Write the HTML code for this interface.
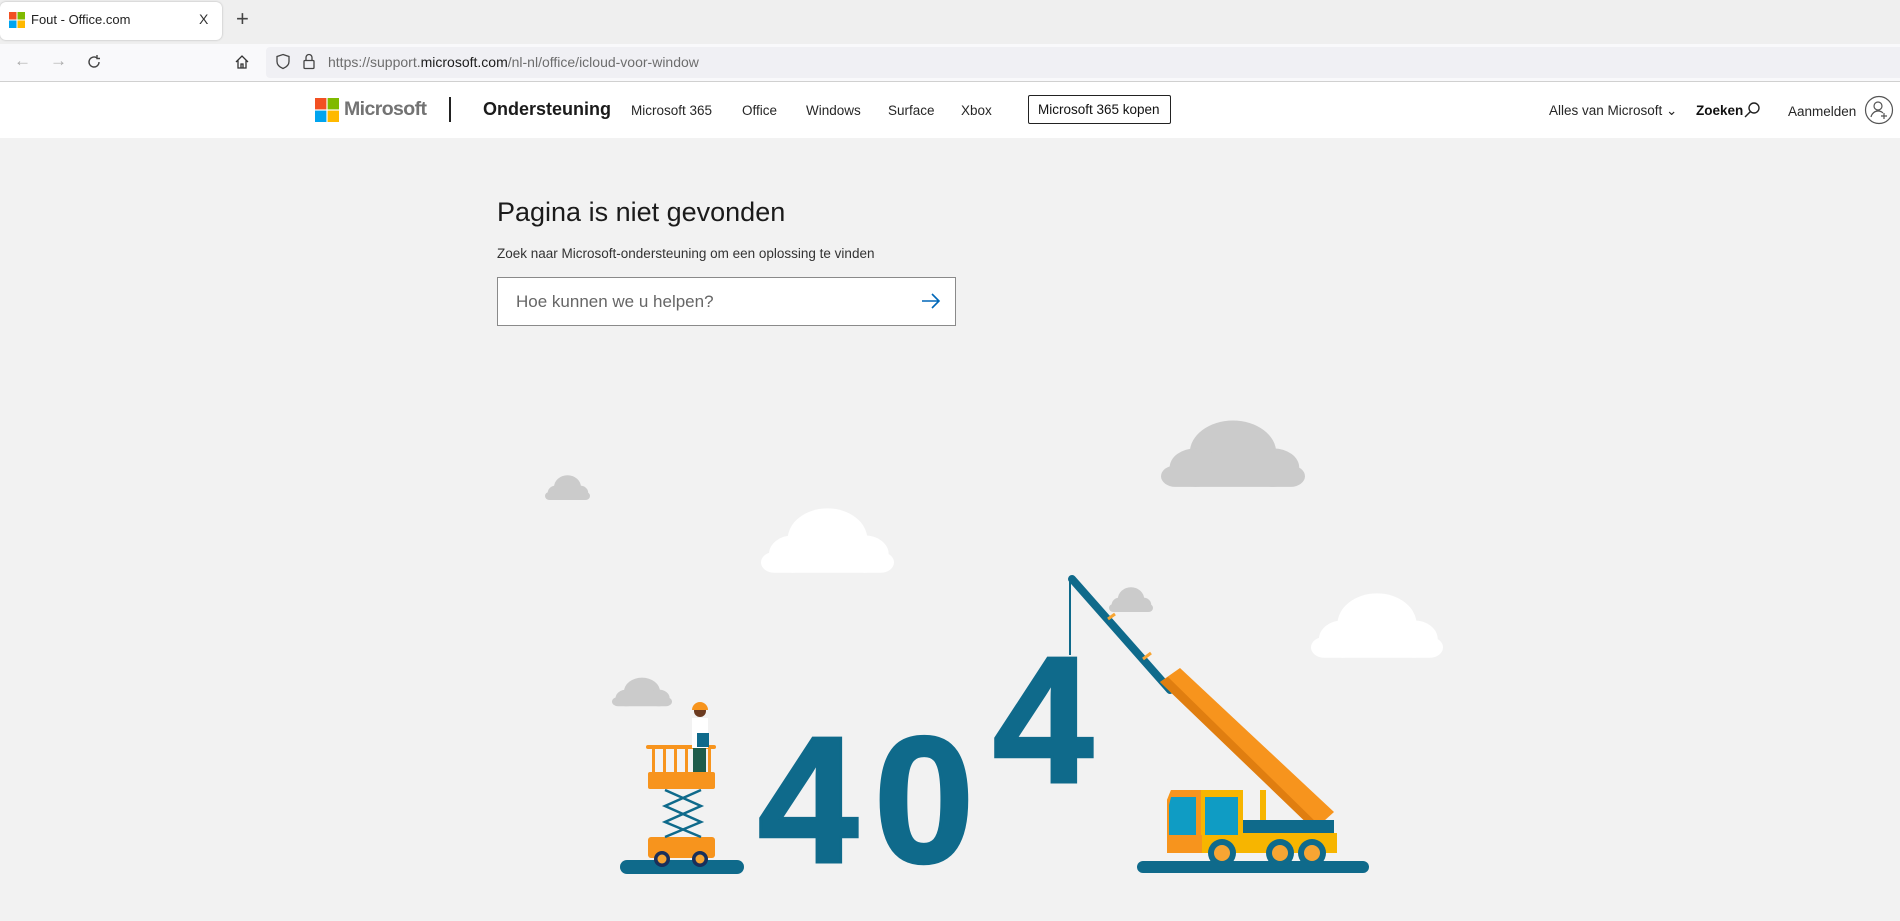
<!DOCTYPE html>
<html><head><meta charset="utf-8"><style>
*{margin:0;padding:0;box-sizing:border-box}
body{width:1900px;height:921px;overflow:hidden;background:#f2f2f2;font-family:"Liberation Sans",sans-serif;position:relative;color:#1b1b1b}
.abs{position:absolute;white-space:nowrap}
#tabs{position:absolute;left:0;top:0;width:1900px;height:44px;background:#efefef}
#tab{position:absolute;left:0;top:2px;width:222px;height:38px;background:#fff;border-radius:6px;box-shadow:0 0 2px rgba(0,0,0,.25)}
#nav{position:absolute;left:0;top:44px;width:1900px;height:38px;background:#f9f9fb;border-bottom:1px solid #d0d0d0}
#url{position:absolute;left:266px;top:47px;width:1634px;height:31px;background:#f0f0f4;border-radius:4px 0 0 4px}
#hdr{position:absolute;left:0;top:82px;width:1900px;height:56px;background:#fff}
.n{font-size:13.5px;top:103px;color:#262626}
</style></head><body>
<div id="tabs"></div>
<div id="tab"></div>
<svg class="abs" style="left:9px;top:12px" width="16" height="16"><rect width="7.5" height="7.5" fill="#f25022"/><rect x="8.5" width="7.5" height="7.5" fill="#7fba00"/><rect y="8.5" width="7.5" height="7.5" fill="#00a4ef"/><rect x="8.5" y="8.5" width="7.5" height="7.5" fill="#ffb900"/></svg>
<div class="abs" style="left:31px;top:12px;font-size:13px;color:#222">Fout - Office.com</div>
<div class="abs" style="left:199px;top:11px;font-size:14px;color:#333">X</div>
<div class="abs" style="left:236px;top:6px;font-size:22px;color:#444;font-weight:300">+</div>
<div id="nav"></div>
<div id="url"></div>
<div class="abs" style="left:14px;top:51px;font-size:17px;color:#aaa">←</div>
<div class="abs" style="left:50px;top:51px;font-size:17px;color:#aaa">→</div>
<svg class="abs" style="left:86px;top:54px" width="16" height="16" fill="none" stroke="#444" stroke-width="1.4"><path d="M13 8a5 5 0 1 1-2-4M11 1v3.5h3"/></svg>
<svg class="abs" style="left:234px;top:54px" width="16" height="16" fill="none" stroke="#333" stroke-width="1.3"><path d="M2 8L8 2l6 6M4 6.5V14h8V6.5M7 14v-4h2v4"/></svg>
<svg class="abs" style="left:275px;top:53px" width="16" height="17" fill="none" stroke="#444" stroke-width="1.3"><path d="M8 1.5l6 2v5c0 3.5-3 5.8-6 7-3-1.2-6-3.5-6-7v-5z"/></svg>
<svg class="abs" style="left:302px;top:53px" width="14" height="17" fill="none" stroke="#444" stroke-width="1.3"><rect x="2" y="7.5" width="10" height="8" rx="1"/><path d="M4 7.5V4.5a3 3 0 0 1 6 0v3"/></svg>
<div class="abs" style="left:328px;top:54px;font-size:14px;color:#6d6d6d">https://support.<span style="color:#1b1b1b">microsoft.com</span>/nl-nl/office/icloud-voor-window</div>
<div id="hdr"></div>
<svg class="abs" style="left:315px;top:98px" width="24" height="24"><rect width="11.4" height="11.4" fill="#f25022"/><rect x="12.6" width="11.4" height="11.4" fill="#7fba00"/><rect y="12.6" width="11.4" height="11.4" fill="#00a4ef"/><rect x="12.6" y="12.6" width="11.4" height="11.4" fill="#ffb900"/></svg>
<div class="abs" style="left:344px;top:98px;font-size:19.5px;color:#737373;font-weight:600;letter-spacing:-0.6px">Microsoft</div>
<div class="abs" style="left:449px;top:97px;width:2px;height:25px;background:#222"></div>
<div class="abs" style="left:483px;top:99px;font-size:18px;font-weight:bold;color:#1b1b1b">Ondersteuning</div>
<div class="abs n" style="left:631px">Microsoft 365</div>
<div class="abs n" style="left:742px">Office</div>
<div class="abs n" style="left:806px">Windows</div>
<div class="abs n" style="left:888px">Surface</div>
<div class="abs n" style="left:961px">Xbox</div>
<div class="abs" style="left:1028px;top:95px;width:143px;height:29px;border:1px solid #222;border-radius:2px"></div>
<div class="abs n" style="left:1038px;top:102px;color:#111">Microsoft 365 kopen</div>
<div class="abs n" style="left:1549px">Alles van Microsoft ⌄</div>
<div class="abs n" style="left:1696px;font-weight:bold;color:#111">Zoeken</div>
<svg class="abs" style="left:1743px;top:101px" width="18" height="18" fill="none" stroke="#222" stroke-width="1.4"><circle cx="11" cy="7" r="5"/><path d="M7.5 10.5L2 16"/></svg>
<div class="abs n" style="left:1788px;top:104px">Aanmelden</div>
<svg class="abs" style="left:1864px;top:95px" width="30" height="30" fill="none" stroke="#555" stroke-width="1.2"><circle cx="15" cy="15" r="13.5"/><circle cx="14" cy="11" r="4"/><path d="M7 22c1-4 4-6 7-6s4 1 5 2M20 18v6M17 21h6"/></svg>

<div class="abs" style="left:497px;top:197px;font-size:27px;color:#1b1b1b;font-weight:300">Pagina is niet gevonden</div>
<div class="abs" style="left:497px;top:246px;font-size:13.5px;color:#333">Zoek naar Microsoft-ondersteuning om een oplossing te vinden</div>
<div class="abs" style="left:497px;top:277px;width:459px;height:49px;background:#fff;border:1px solid #8a8a8a"></div>
<div class="abs" style="left:516px;top:292px;font-size:17px;color:#666">Hoe kunnen we u helpen?</div>
<svg class="abs" style="left:920px;top:291px" width="22" height="20" fill="none" stroke="#0067b8" stroke-width="1.6"><path d="M2 10h17M12 3l7 7-7 7"/></svg>

<svg class="abs" style="left:0;top:0" width="1900" height="921">
<defs>
<g id="cl"><circle cx="50" cy="38" r="30"/><circle cx="24" cy="52" r="18"/><circle cx="78" cy="52" r="18"/><rect x="0" y="50" width="100" height="20" rx="10"/></g>
</defs>
<use href="#cl" fill="#cbcbcb" transform="translate(1161,412) scale(1.44,1.07)"/>
<use href="#cl" fill="#cbcbcb" transform="translate(545,472) scale(0.45,0.4)"/>
<use href="#cl" fill="#fff" transform="translate(761,500) scale(1.33,1.04)"/>
<use href="#cl" fill="#cbcbcb" transform="translate(1109,584) scale(0.44,0.4)"/>
<use href="#cl" fill="#fff" transform="translate(1311,585) scale(1.32,1.04)"/>
<use href="#cl" fill="#cbcbcb" transform="translate(612,674) scale(0.6,0.46)"/>

<g fill="#0f6a8b" font-family="Liberation Sans,sans-serif" font-weight="bold" font-size="180" stroke="#0f6a8b" stroke-width="3">
<text x="758" y="862">4</text><text x="874" y="862">0</text><text x="993" y="782">4</text>
</g>
<rect x="620" y="860" width="124" height="14" rx="7" fill="#0f6a8b"/>
<rect x="648" y="837" width="67" height="21" rx="3" fill="#f7941d"/>
<circle cx="662" cy="859" r="8" fill="#1a2f5a"/><circle cx="662" cy="859" r="4.5" fill="#f7a533"/>
<circle cx="700" cy="859" r="8" fill="#1a2f5a"/><circle cx="700" cy="859" r="4.5" fill="#f7a533"/>
<path d="M665 790l36 16-36 16 36 15M701 790l-36 16 36 16-36 15" stroke="#0f6a8b" stroke-width="2.5" fill="none"/>
<rect x="648" y="772" width="67" height="17" rx="2" fill="#f7941d"/>
<rect x="646" y="745" width="70" height="4" rx="2" fill="#f7941d"/>
<g fill="#f7941d"><rect x="652" y="747" width="3" height="26"/><rect x="663" y="747" width="3" height="26"/><rect x="674" y="747" width="3" height="26"/><rect x="685" y="747" width="3" height="26"/><rect x="708" y="747" width="3" height="26"/></g>
<rect x="692" y="718" width="16" height="30" fill="#fff"/><rect x="697" y="733" width="12" height="14" fill="#0f6a8b"/>
<rect x="693" y="748" width="13" height="24" fill="#1e5c4a"/>
<circle cx="700" cy="711" r="6" fill="#6b3a1f"/>
<path d="M692 710a8 8 0 0 1 16 0z" fill="#f7941d"/>
<line x1="1070" y1="580" x2="1070" y2="655" stroke="#0f6a8b" stroke-width="2"/>
<line x1="1072" y1="579" x2="1170" y2="690" stroke="#0f6a8b" stroke-width="8" stroke-linecap="round"/>
<line x1="1108" y1="619" x2="1115" y2="614" stroke="#f7a533" stroke-width="3"/>
<line x1="1143" y1="659" x2="1151" y2="653" stroke="#f7a533" stroke-width="3"/>
<polygon points="1160,682 1180,668 1334,812 1314,830" fill="#f7941d"/>
<polygon points="1160,682 1168,677 1320,826 1314,830" fill="#e07e10"/>
<rect x="1260" y="790" width="6" height="32" fill="#f7b500"/>
<rect x="1137" y="861" width="232" height="12" rx="6" fill="#0f6a8b"/>
<rect x="1243" y="820" width="91" height="15" fill="#0f6a8b"/>
<rect x="1167" y="833" width="170" height="20" fill="#f7b500"/>
<path d="M1171 790h72v45h-76v-35z" fill="#f7b500"/>
<path d="M1171 790h30v45h-34v-35z" fill="#f7941d"/>
<path d="M1171 797h25v38h-27v-30z" fill="#0f9cc4"/>
<path d="M1205 797h33v38h-33z" fill="#0f9cc4"/>
<rect x="1167" y="835" width="35" height="18" fill="#f7941d"/>
<g fill="#0f6a8b"><circle cx="1222" cy="853" r="14"/><circle cx="1280" cy="853" r="14"/><circle cx="1312" cy="853" r="14"/></g>
<g fill="#f7a533"><circle cx="1222" cy="853" r="8"/><circle cx="1280" cy="853" r="8"/><circle cx="1312" cy="853" r="8"/></g>
</svg>
</body></html>
